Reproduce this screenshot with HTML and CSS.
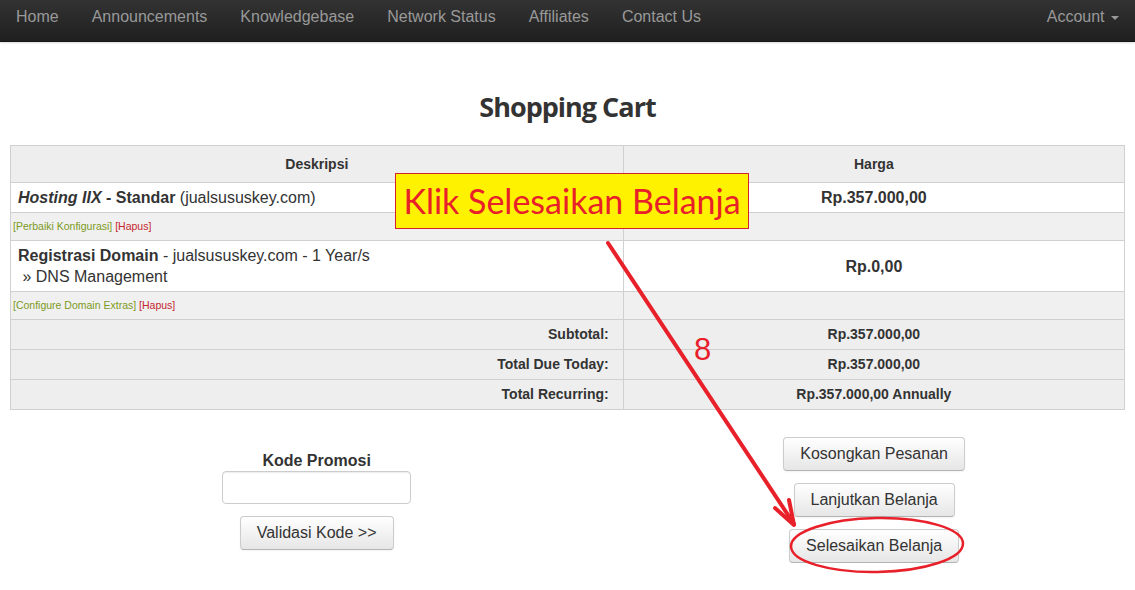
FILE: index.html
```html
<!DOCTYPE html>
<html lang="id">
<head>
    <meta charset="UTF-8">
    <title>Shopping Cart</title>
    <link rel="stylesheet" href="styles.css">
</head>
<body>
    <div class="navbar">
        <ul class="nav">
            <li><a href="#">Home</a></li>
            <li><a href="#">Announcements</a></li>
            <li><a href="#">Knowledgebase</a></li>
            <li><a href="#">Network Status</a></li>
            <li><a href="#">Affiliates</a></li>
            <li><a href="#">Contact Us</a></li>
        </ul>
        <a href="#" class="account">Account <span class="caret"></span></a>
    </div>

    <div id="main">
        <h1 class="title">Shopping Cart</h1>

        <table class="cart">
            <tr class="head">
                <th class="desc">Deskripsi</th>
                <th>Harga</th>
            </tr>
            <tr class="item">
                <td><b><i>Hosting IIX</i> - Standar</b> (jualsususkey.com)</td>
                <td class="price">Rp.357.000,00</td>
            </tr>
            <tr class="links">
                <td><a href="#" class="conf">[Perbaiki Konfigurasi]</a> <a href="#" class="del">[Hapus]</a></td>
                <td></td>
            </tr>
            <tr class="item">
                <td><b>Registrasi Domain</b> - jualsususkey.com - 1 Year/s<br>&nbsp;» DNS Management</td>
                <td class="price">Rp.0,00</td>
            </tr>
            <tr class="links">
                <td><a href="#" class="conf">[Configure Domain Extras]</a> <a href="#" class="del">[Hapus]</a></td>
                <td></td>
            </tr>
            <tr class="total">
                <td class="label">Subtotal:</td>
                <td>Rp.357.000,00</td>
            </tr>
            <tr class="total">
                <td class="label">Total Due Today:</td>
                <td>Rp.357.000,00</td>
            </tr>
            <tr class="total">
                <td class="label">Total Recurring:</td>
                <td>Rp.357.000,00 Annually</td>
            </tr>
        </table>

        <div class="actions">
            <div class="promo">
                <p class="promo-label">Kode Promosi</p>
                <input type="text" class="promo-input">
                <button class="btn">Validasi Kode &gt;&gt;</button>
            </div>
            <div class="buttons">
                <button class="btn">Kosongkan Pesanan</button>
                <button class="btn">Lanjutkan Belanja</button>
                <button class="btn">Selesaikan Belanja</button>
            </div>
        </div>
    </div>

    <!-- catatan di atas gambar -->
    <div class="note">Klik Selesaikan Belanja</div>
    <div class="step">8</div>
    <svg class="marks" width="1135" height="590" viewBox="0 0 1135 590">
        <path d="M608 243 L794 524" stroke="#e8202a" stroke-width="4" fill="none" stroke-linecap="round"/>
        <path d="M775 508 L794 525 L789 500" stroke="#e8202a" stroke-width="4" fill="none" stroke-linecap="round" stroke-linejoin="round"/>
        <ellipse cx="877" cy="545" rx="86" ry="27" stroke="#e8202a" stroke-width="2.5" fill="none" transform="rotate(-1 877 545)"/>
    </svg>
</body>
</html>
```

FILE: styles.css
```css
body{
    margin: 0;
    font-family: "Liberation Sans", Arial, sans-serif;
    color: #333;
    background: #fff;
}

.navbar{
    display: flex;
    height: 41px;
    background: linear-gradient(#333, #1f1f1f);
    border-bottom: 1px solid #151515;
    box-shadow: 0 1px 2px rgba(0,0,0,0.15);
}
.nav{
    display: flex;
    margin: 0;
    padding: 0;
    list-style: none;
}
.nav a,.account{
    display: block;
    padding: 6px 17px 0 16px;
    line-height: 22px;
    font-size: 16px;
    color: #999;
    text-decoration: none;
}
.account{
    margin-left: auto;
    padding-right: 16px;
}
.caret{
    display: inline-block;
    width: 0;
    height: 0;
    margin-left: 2px;
    vertical-align: middle;
    border-top: 4px solid #999;
    border-left: 4px solid transparent;
    border-right: 4px solid transparent;
}

#main{
    padding: 0 10px;
}
.title{
    margin: 47px 0 20px;
    text-align: center;
    font-family: "Open Sans", sans-serif;
    font-size: 27px;
    line-height: 36px;
    letter-spacing: -1px;
    font-weight: 700;
    color: #333;
}

.cart{
    width: 100%;
    border-collapse: collapse;
    border: 1px solid #ccc;
}
.cart th,.cart td{
    border: 1px solid #d0d0d0;
}
.cart th{
    width: 45%;
    padding: 10px;
    line-height: 16px;
    font-size: 14px;
    background: #eee;
}
.cart th.desc{
    width: 55%;
}
.item td{
    padding: 4px 7px;
    line-height: 21px;
    font-size: 16px;
}
.item td.price{
    text-align: center;
    font-weight: bold;
}
.links td{
    padding: 7px 2px;
    line-height: 13px;
    font-size: 10.5px;
    background: #f0f0f0;
}
.links a{
    text-decoration: none;
}
.conf{
    color: #7c9a1d;
}
.del{
    color: #c4262e;
}
.total td{
    padding: 6px 14px;
    line-height: 17px;
    font-size: 14px;
    font-weight: bold;
    text-align: center;
    background: #eee;
}
.total td.label{
    text-align: right;
}

.actions{
    display: grid;
    grid-template-columns: 55% 45%;
    align-items: center;
    margin-top: 27px;
}
.promo,.buttons{
    display: flex;
    flex-direction: column;
    align-items: center;
    gap: 12px;
}
.promo-label{
    margin: 0 0 -12px;
    font-size: 16px;
    font-weight: bold;
    line-height: 20px;
}
.promo-input{
    width: 189px;
    height: 33px;
    box-sizing: border-box;
    border: 1px solid #ccc;
    border-radius: 4px;
    box-shadow: inset 0 1px 1px rgba(0,0,0,0.075);
}
.btn{
    padding: 6px 16px;
    font-family: "Liberation Sans", Arial, sans-serif;
    font-size: 16px;
    line-height: 20px;
    color: #333;
    background: linear-gradient(#fff, #e6e6e6);
    border: 1px solid #ccc;
    border-bottom-color: #b3b3b3;
    border-radius: 4px;
    box-shadow: inset 0 1px 0 rgba(255,255,255,0.2), 0 1px 2px rgba(0,0,0,0.05);
}

.note{
    position: absolute;
    left: 395px;
    top: 173px;
    width: 352px;
    height: 54px;
    line-height: 54px;
    text-align: center;
    background: #fff200;
    border: 1px solid #d2232a;
    font-family: "Lato", sans-serif;
    font-size: 34px;
    color: #e8202a;
}
.step{
    position: absolute;
    left: 694px;
    top: 332px;
    font-family: "Liberation Sans", Arial, sans-serif;
    font-size: 31px;
    color: #e8202a;
}
.marks{
    position: absolute;
    left: 0;
    top: 0;
    pointer-events: none;
}
```
